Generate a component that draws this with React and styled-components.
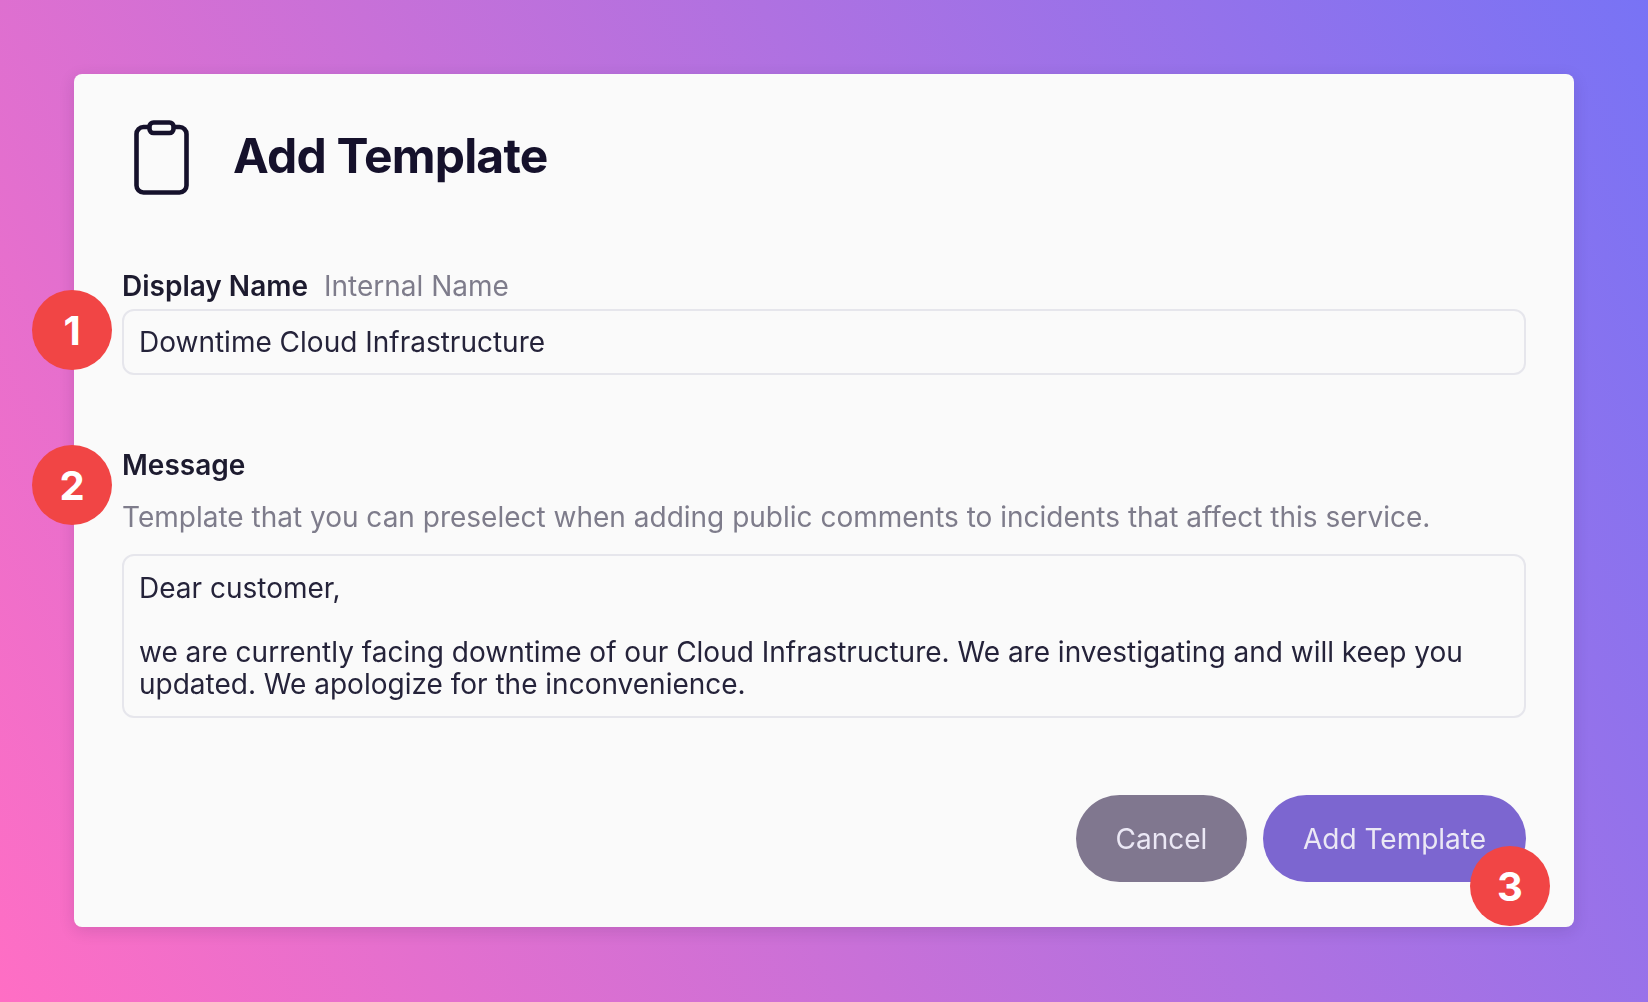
import React from "react";
import styled, { createGlobalStyle } from "styled-components";

const GlobalStyle = createGlobalStyle`
  html, body {
    margin: 0;
    padding: 0;
  }
  body {
    font-family: Inter, "Liberation Sans", sans-serif;
    color: #15132b;
  }
`;

const Page = styled.div`
  box-sizing: border-box;
  width: 1648px;
  height: 1002px;
  padding: 74px;
  background: linear-gradient(62deg, #ff6ec4, #7873f5);
  overflow: hidden;
`;

const Card = styled.div`
  position: relative;
  box-sizing: border-box;
  width: 1500px;
  height: 853px;
  padding: 46px 48px 0;
  background: #fafafa;
  border-radius: 8px;
  box-shadow: 0 4px 16px rgba(40, 20, 70, 0.14);
`;

const Header = styled.div`
  display: flex;
  align-items: center;
  gap: 44px;
  height: 75px;
  padding-left: 12px;
  filter: blur(0.6px);
`;

const Title = styled.h1`
  margin: 0 0 4px;
  font-size: 48px;
  line-height: 56px;
  font-weight: 700;
  letter-spacing: -0.8px;
  color: #15112b;
`;

const Section = styled.div`
  position: relative;
  margin-top: ${(p) => p.$top}px;
`;

const LabelRow = styled.div`
  display: flex;
  align-items: center;
  gap: 16px;
  height: 30px;
  filter: blur(0.6px);
`;

const Label = styled.span`
  font-size: 28px;
  line-height: 30px;
  font-weight: 600;
  color: #1d1b2f;
`;

const SubLabel = styled.span`
  font-size: 28px;
  line-height: 30px;
  font-weight: 400;
  color: #7e7c8b;
`;

const Hint = styled.p`
  margin: 21px 0 0;
  font-size: 28px;
  line-height: 32px;
  color: #7e7c8b;
  filter: blur(0.6px);
`;

const FieldBox = styled.div`
  box-sizing: border-box;
  width: 100%;
  height: ${(p) => p.$height}px;
  margin-top: ${(p) => p.$top}px;
  padding: ${(p) => p.$padY}px 15px;
  border: 2px solid #e6e6ec;
  border-radius: 12px;
  font-size: 28px;
  line-height: 32px;
  color: #25233a;
  white-space: pre-wrap;
  filter: blur(0.6px);
`;

const Actions = styled.div`
  display: flex;
  justify-content: flex-end;
  gap: 16px;
  margin-top: 77px;
`;

const Button = styled.button`
  height: 87px;
  padding: 0;
  width: ${(p) => p.$width}px;
  border: 0;
  border-radius: 44px;
  background: ${(p) => p.$bg};
  color: #ebe8f5;
  font-family: inherit;
  font-size: 28px;
  font-weight: 400;
  filter: blur(0.6px);
`;

const Badge = styled.div`
  position: absolute;
  left: ${(p) => p.$left}px;
  top: ${(p) => p.$top}px;
  display: flex;
  align-items: center;
  justify-content: center;
  width: 80px;
  height: 80px;
  border-radius: 50%;
  background: #f14545;
  color: #fff;
  font-size: 40px;
  font-weight: 700;
`;

function ClipboardIcon() {
  return (
    <svg width="55" height="75" viewBox="0 0 55 75" fill="none">
      <rect x="2.5" y="7" width="50" height="65.5" rx="7" stroke="#15112b" strokeWidth="4.6" />
      <rect x="15.5" y="2.5" width="24" height="10.5" rx="4" fill="#fafafa" stroke="#15112b" strokeWidth="4.6" />
    </svg>
  );
}

export default function App() {
  return (
    <>
      <GlobalStyle />
      <Page>
        <Card>
          <Header>
            <ClipboardIcon />
            <Title>Add Template</Title>
          </Header>
          <Section $top={76}>
            <LabelRow>
              <Label>Display Name</Label>
              <SubLabel>Internal Name</SubLabel>
            </LabelRow>
            <FieldBox $height={66} $top={8} $padY={15}>
              Downtime Cloud Infrastructure
            </FieldBox>
            <Badge $left={-90} $top={19}>1</Badge>
          </Section>
          <Section $top={75}>
            <LabelRow>
              <Label>Message</Label>
            </LabelRow>
            <Hint>Template that you can preselect when adding public comments to incidents that affect this service.</Hint>
            <FieldBox $height={164} $top={21} $padY={16}>
              {"Dear customer,\n\nwe are currently facing downtime of our Cloud Infrastructure. We are investigating and will keep you updated. We apologize for the inconvenience."}
            </FieldBox>
            <Badge $left={-90} $top={-5}>2</Badge>
          </Section>
          <Actions>
            <Button $width={171} $bg="#80778f">Cancel</Button>
            <Button $width={263} $bg="#7c66d0">Add Template</Button>
          </Actions>
          <Badge $left={1396} $top={772}>3</Badge>
        </Card>
      </Page>
    </>
  );
}
